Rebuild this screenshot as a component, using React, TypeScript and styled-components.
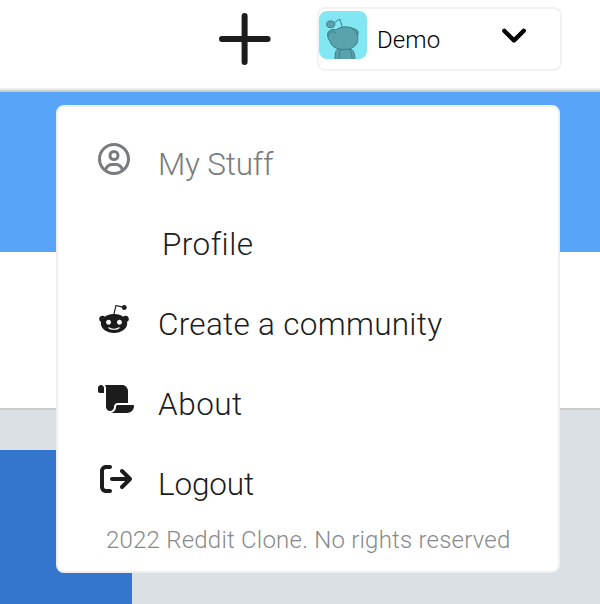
import React from "react";
import styled, { createGlobalStyle } from "styled-components";
import {
  FaArrowRightFromBracket,
  FaChevronDown,
  FaRegCircleUser,
  FaScroll,
} from "react-icons/fa6";
import { FaRedditAlien } from "react-icons/fa";

const GlobalStyle = createGlobalStyle`
  * { box-sizing: border-box; }
  body {
    margin: 0;
    overflow: hidden;
    font-family: "Roboto", "Noto Sans", sans-serif;
    font-weight: 300;
    color: #1c1c1c;
  }
`;

const Page = styled.div`
  position: relative;
  display: flex;
  flex-direction: column;
  width: 600px;
  height: 604px;
  overflow: hidden;
  background: #fff;
`;

const Header = styled.header`
  display: flex;
  align-items: flex-start;
  height: 90px;
  flex: none;
  padding: 7px 38px 0 219px;
  border-bottom: 2px solid #eeeeee;
`;

const CreateButton = styled.button`
  display: flex;
  margin: 6px 46px 0 0;
  padding: 0;
  border: 0;
  background: none;
`;

const UserButton = styled.button`
  display: flex;
  align-items: flex-start;
  width: 245px;
  height: 64px;
  padding: 2px 0 0;
  border: 2px solid #f2f2f2;
  border-radius: 8px;
  background: #fff;
  color: #000;
  font: inherit;
`;

const Avatar = styled.svg`
  width: 48px;
  height: 48px;
  flex: none;
  border-radius: 8px;
`;

const UserName = styled.span`
  width: 124px;
  margin-left: 10px;
  text-align: left;
  font-size: 24px;
  line-height: 30px;
  padding-top: 14px;
  letter-spacing: 0.1px;
`;

const Chevron = styled(FaChevronDown)`
  width: 26px;
  height: 26px;
  margin-top: 10px;
  overflow: visible;
  stroke: currentColor;
  stroke-width: 20px;
  stroke-linejoin: round;
`;

const Banner = styled.div`
  height: 162px;
  flex: none;
  border-top: 2px solid #cccccc;
  background: #58a4f8;
`;

const CommunityBar = styled.div`
  height: 158px;
  flex: none;
  border-bottom: 2px solid #cccccc;
  background: #fff;
`;

const Content = styled.main`
  flex: 1;
  padding-top: 40px;
  background: #dae0e4;
`;

const SidePanel = styled.div`
  width: 132px;
  height: 154px;
  background: #3476cd;
`;

const Menu = styled.nav`
  position: absolute;
  top: 105px;
  left: 56px;
  width: 504px;
  height: 468px;
  padding-top: 17px;
  border: 2px solid #edeff1;
  border-radius: 8px;
  background: #fff;
`;

const MenuRow = styled.div<{ $muted?: boolean }>`
  display: flex;
  height: 80px;
  padding-left: 40px;
  color: ${({ $muted }) => ($muted ? "#787c7e" : "#1c1c1c")};
`;

const IconSlot = styled.span<{ $width: number; $inset: number }>`
  display: flex;
  width: 60px;
  padding: 19px 0 0 ${({ $inset }) => $inset}px;
  flex: none;

  svg {
    width: ${({ $width }) => $width}px;
    height: 32px;
    flex: none;
  }
`;

const Label = styled.span<{ $indent: number; $spacing: number }>`
  padding: 1px 0 0 ${({ $indent }) => $indent}px;
  font-size: 31.5px;
  line-height: 80px;
  letter-spacing: ${({ $spacing }) => $spacing}px;
  white-space: nowrap;
`;

const Footnote = styled.p`
  margin: 0 0 0 48px;
  font-size: 24px;
  line-height: 32px;
  letter-spacing: 0.22px;
  color: #878a8c;
  white-space: nowrap;
`;

const items = [
  { label: "My Stuff", icon: <FaRegCircleUser />, muted: true, width: 32, inset: 0, indent: 0, spacing: -0.2 },
  { label: "Profile", icon: null, muted: false, width: 32, inset: 0, indent: 4, spacing: 0.45 },
  { label: "Create a community", icon: <FaRedditAlien />, muted: false, width: 32, inset: 0, indent: 0, spacing: 0.29 },
  { label: "About", icon: <FaScroll />, muted: false, width: 36, inset: 0, indent: 0, spacing: 0.5 },
  { label: "Logout", icon: <FaArrowRightFromBracket />, muted: false, width: 32, inset: 2, indent: 0, spacing: -0.15 },
];

const PlusIcon = () => (
  <svg width="52" height="52" viewBox="0 0 52 52" stroke="#1c1c1c" strokeWidth="6" strokeLinecap="round">
    <path d="M25.6 3v46M3 26h45.6" />
  </svg>
);

const Snoo = () => (
  <Avatar viewBox="0 0 48 48">
    <rect width="48" height="48" fill="#82e7f2" />
    <g fill="#5ba3ac" stroke="#3c7d87" strokeWidth="1">
      <path d="M16 49c0-8 1-11 4-11h11c3 0 5 4 5 11z" />
      <path d="M20 49c0-5 0-8 2-10M31 39c2 3 2 6 2 10" fill="none" />
      <path d="M9 26c-2-5 3-9 8-7 5-4 13-4 18-1 4 0 5 4 3.500 7 2 8-4 13.500-13.500 13.500-8 0-14-4-14-9-1 0-2-1-2-3.500z" />
      <path d="M9 25c2-5 4-5 8-3M33 18c4 1 5 3 5 6" fill="none" />
      <ellipse cx="11.7" cy="13.3" rx="4.1" ry="3.4" />
      <path d="M15.700 11.500l5-3.500 2.800 8.500" fill="none" />
    </g>
  </Avatar>
);

export default function App() {
  return (
    <Page>
      <GlobalStyle />
      <Header>
        <CreateButton aria-label="Create post">
          <PlusIcon />
        </CreateButton>
        <UserButton>
          <Snoo />
          <UserName>Demo</UserName>
          <Chevron />
        </UserButton>
      </Header>
      <Banner />
      <CommunityBar />
      <Content>
        <SidePanel />
      </Content>
      <Menu>
        {items.map(({ label, icon, muted, width, inset, indent, spacing }) => (
          <MenuRow key={label} $muted={muted}>
            <IconSlot $width={width} $inset={inset}>{icon}</IconSlot>
            <Label $indent={indent} $spacing={spacing}>{label}</Label>
          </MenuRow>
        ))}
        <Footnote>2022 Reddit Clone. No rights reserved</Footnote>
      </Menu>
    </Page>
  );
}
